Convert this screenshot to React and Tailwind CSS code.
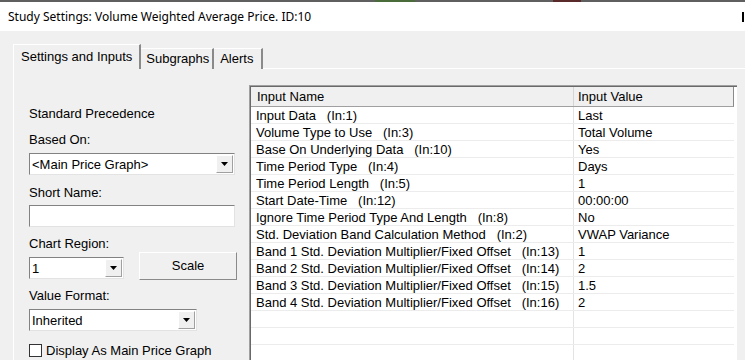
import React from 'react';

const rows = [
    ['Input Data', '(In:1)', 'Last'],
    ['Volume Type to Use', '(In:3)', 'Total Volume'],
    ['Base On Underlying Data', '(In:10)', 'Yes'],
    ['Time Period Type', '(In:4)', 'Days'],
    ['Time Period Length', '(In:5)', '1'],
    ['Start Date-Time', '(In:12)', '00:00:00'],
    ['Ignore Time Period Type And Length', '(In:8)', 'No'],
    ['Std. Deviation Band Calculation Method', '(In:2)', 'VWAP Variance'],
    ['Band 1 Std. Deviation Multiplier/Fixed Offset', '(In:13)', '1'],
    ['Band 2 Std. Deviation Multiplier/Fixed Offset', '(In:14)', '2'],
    ['Band 3 Std. Deviation Multiplier/Fixed Offset', '(In:15)', '1.5'],
    ['Band 4 Std. Deviation Multiplier/Fixed Offset', '(In:16)', '2'],
    ['', '', ''],
    ['', '', ''],
    ['', '', ''],
];

const Arrow = () => (
    <div className="w-[17px] h-full bg-[#f0f0f0] border-t border-l border-white border-r border-b border-r-[#a0a0a0] border-b-[#a0a0a0] flex items-center justify-center">
        <svg width="7" height="4" viewBox="0 0 7 4">
            <path d="M0 0H7L3.5 4Z" fill="#000" />
        </svg>
    </div>
);

const Combo = ({ value, width, className = '' }) => (
    <div className={`${width} ${className} h-[22px] bg-white border-t border-l border-t-[#828282] border-l-[#828282] border-b border-r border-b-[#e3e3e3] border-r-[#e3e3e3] flex items-stretch p-[1px]`}>
        <div className="flex-1 pl-[1px] leading-[19px] text-[13px] text-black">{value}</div>
        <Arrow />
    </div>
);

const Label = ({ children, className = '' }) => (
    <div className={`h-[17px] text-[13px] leading-[17px] text-black ${className}`}>{children}</div>
);

export default function App() {
    return (
        <div className="w-[745px] h-[360px] overflow-hidden bg-[#f0f0f0] font-['Liberation_Sans',Arial,sans-serif]">
            <div className="h-[2px] bg-[#5f5f5f] flex">
                <div className="ml-[375px] w-[40px] bg-[#4a6b3a]" />
                <div className="ml-[138px] w-[28px] bg-[#5a2a2a]" />
            </div>
            <div className="h-[29px] bg-white flex items-center pl-[8px] text-[12px] text-black font-['Noto_Sans',sans-serif]">
                <span className="flex-1">Study Settings: Volume Weighted Average Price. ID:10</span>
                <span className="w-[2px] h-[10px] bg-black mr-[1px]" />
            </div>

            <div className="flex items-end h-[38px] pl-[13px]">
                <div className="h-[25px] px-[7px] flex items-center text-[13px] text-black border-t border-l border-white border-r-2 border-r-[#8a8a8a]">
                    Settings and Inputs
                </div>
                <div className="h-[21px] pl-[5px] pr-[3px] flex items-center text-[13px] text-black border-t border-white border-r-2 border-r-[#8a8a8a]">
                    Subgraphs
                </div>
                <div className="h-[21px] pl-[6px] pr-[8px] flex items-center text-[13px] text-black border-t border-white border-r-2 border-r-[#8a8a8a]">
                    Alerts
                </div>
                <div className="flex-1 border-b border-white" />
            </div>

            <div className="ml-[13px] border-l border-white flex">
                <div className="w-[235px] pl-[15px] flex flex-col">
                    <Label className="mt-[36px]">Standard Precedence</Label>
                    <Label className="mt-[9px]">Based On:</Label>
                    <Combo value="<Main Price Graph>" width="w-[206px]" className="mt-[5px]" />
                    <Label className="mt-[9px]">Short Name:</Label>
                    <div className="mt-[4px] w-[206px] h-[22px] bg-white border-t border-l border-t-[#828282] border-l-[#828282] border-b border-r border-b-[#e3e3e3] border-r-[#e3e3e3]" />
                    <Label className="mt-[8px]">Chart Region:</Label>
                    <div className="flex items-start h-[28px]">
                        <Combo value="1" width="w-[95px]" className="mt-[5px]" />
                        <div className="ml-[15px] w-[98px] h-[28px] bg-[#f0f0f0] border border-t-white border-l-white border-r-[#8a8a8a] border-b-[#8a8a8a] flex items-center justify-center text-[13px] text-black">
                            Scale
                        </div>
                    </div>
                    <Label className="mt-[7px]">Value Format:</Label>
                    <Combo value="Inherited" width="w-[168px]" className="mt-[5px]" />
                    <div className="mt-[11px] flex items-center">
                        <div className="w-[13px] h-[13px] bg-white border border-[#333]" />
                        <span className="ml-[4px] text-[13px] leading-[17px] text-black">Display As Main Price Graph</span>
                    </div>
                </div>

                <div className="mt-[16px] w-[488px] h-[300px] border-t border-l border-t-[#a0a0a0] border-l-[#a0a0a0] bg-white">
                    <div className="h-full border-t border-l border-[#696969] pr-[3px]">
                        <div className="flex h-[20px] bg-[#f0f0f0] border-b border-[#a0a0a0] border-r border-r-[#8a8a8a] text-[13px] text-black">
                            <div className="w-[323px] pl-[6px] flex items-center border-r border-[#d5d5d5]">Input Name</div>
                            <div className="flex-1 pl-[4px] flex items-center">Input Value</div>
                        </div>
                        {rows.map((r, i) => (
                            <div key={i} className="flex h-[17px] border-b border-[#ececec] text-[13px] text-black leading-[17px]">
                                <div className="w-[323px] pl-[5px] border-r border-[#e3e3e3] whitespace-pre">
                                    {r[0] ? `${r[0]}   ${r[1]}` : ''}
                                </div>
                                <div className="flex-1 pl-[4px]">{r[2]}</div>
                            </div>
                        ))}
                    </div>
                </div>
            </div>
        </div>
    );
}
